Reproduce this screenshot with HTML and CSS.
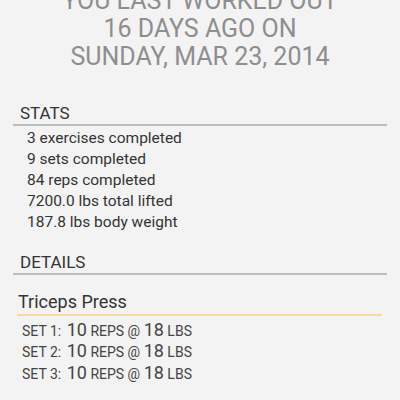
FILE: index.html
```html
<!DOCTYPE html>
<html lang="en">
<head>
    <meta charset="UTF-8">
    <meta name="viewport" content="width=device-width, initial-scale=1.0">
    <title>Workout Summary</title>
    <link rel="stylesheet" href="styles.css">
</head>
<body>
    <main>
        <header class="last-workout">
            <p>You last worked out</p>
            <p>16 days ago on</p>
            <p>Sunday, Mar 23, 2014</p>
        </header>

        <section class="stats">
            <h2>Stats</h2>
            <ul>
                <li>3 exercises completed</li>
                <li>9 sets completed</li>
                <li>84 reps completed</li>
                <li>7200.0 lbs total lifted</li>
                <li>187.8 lbs body weight</li>
            </ul>
        </section>

        <section class="details">
            <h2>Details</h2>
            <div class="exercise">
                <h3>Triceps Press</h3>
                <ul class="sets">
                    <li><span class="label">Set 1:</span> <span class="big">10</span> reps @ <span class="big">18</span> lbs</li>
                    <li><span class="label">Set 2:</span> <span class="big">10</span> reps @ <span class="big">18</span> lbs</li>
                    <li><span class="label">Set 3:</span> <span class="big">10</span> reps @ <span class="big">18</span> lbs</li>
                </ul>
            </div>
        </section>
    </main>
</body>
</html>
```

FILE: styles.css
```css
body {
    font-family: Roboto, "Liberation Sans", sans-serif;
    margin: 0;
    background-color: #f3f3f3;
    color: #333333;
    overflow: hidden;
}
ul {
    list-style-type: none;
    margin: 0;
    padding: 0;
}
.last-workout {
    margin-top: -13.5px;
    text-align: center;
    text-transform: uppercase;
    color: #8e8e8e;
    font-size: 25px;
    line-height: 28px;
}
.last-workout p {
    margin: 0;
}
.stats, .details {
    margin: 0 13px;
}
.stats {
    margin-top: 32px;
}
.details {
    margin-top: 19px;
}
h2 {
    margin: 0;
    padding: 0 0 1px 7px;
    font-size: 17px;
    line-height: 20px;
    font-weight: normal;
    text-transform: uppercase;
    color: #333333;
    border-bottom: 2px solid #bdbdbd;
}
.stats ul {
    margin-top: 2px;
    padding-left: 14px;
    font-size: 15.5px;
    line-height: 21px;
}
.exercise {
    margin: 16px 5px 0 4px;
}
h3 {
    margin: 0;
    padding: 0 0 1px 1px;
    font-size: 18px;
    line-height: 22px;
    font-weight: normal;
    color: #333333;
    border-bottom: 2px solid #f7da9c;
}
.sets {
    margin-top: 5px;
    padding-left: 5px;
    color: #444444;
    font-size: 14px;
    line-height: 21.5px;
    text-transform: uppercase;
}
.sets .label {
    margin-right: 2px;
}
.sets .big {
    font-size: 18px;
    line-height: 18px;
}
```
